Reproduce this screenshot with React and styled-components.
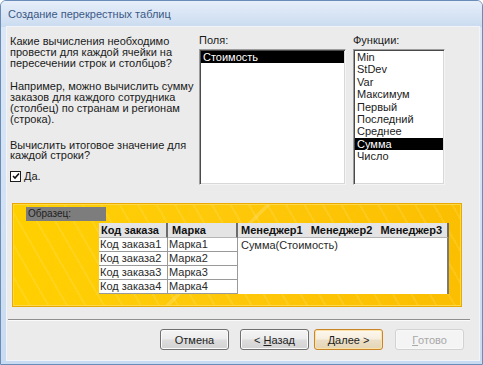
import React from "react";
import styled, { createGlobalStyle } from "styled-components";

const GlobalStyle = createGlobalStyle`
  html, body {
    margin: 0;
    padding: 0;
    background: #ffffff;
  }
  body {
    font-family: "Liberation Sans", Arial, sans-serif;
    font-size: 11px;
    color: #1a1a1a;
  }
`;

const Window = styled.div`
  width: 483px;
  height: 365px;
  box-sizing: border-box;
  border: 1px solid #6a8cb8;
  border-radius: 6px 6px 0 0;
  background: linear-gradient(180deg, #dde8f6 0%, #c9dbf1 100%);
  display: flex;
  flex-direction: column;
  overflow: hidden;
`;

const TitleBar = styled.div`
  height: 26px;
  flex: none;
  display: flex;
  align-items: center;
  padding-left: 7px;
  background: linear-gradient(180deg, #e6eef9 0%, #d6e3f4 60%, #cadbf0 100%);
  color: #3b5a86;
  font-size: 11px;
`;

const Body = styled.div`
  flex: 1;
  margin: 0 3px 4px 6px;
  background: #ebebeb;
  box-shadow: 0 0 0 1px #f1f5fb;
  display: flex;
  flex-direction: column;
`;

const TopRow = styled.div`
  height: 176px;
  box-sizing: border-box;
  padding: 7px 0 0 3px;
  display: flex;
  flex: none;
`;

const Description = styled.div`
  width: 186px;
  padding-top: 2px;
  display: flex;
  flex-direction: column;
`;

const Para = styled.p`
  margin: 0 0 ${(p) => p.$after || 13}px 0;
  line-height: 10.8px;
`;

const CheckRow = styled.label`
  display: flex;
  align-items: center;
  gap: 3px;
`;

const CheckBox = styled.span`
  width: 9px;
  height: 9px;
  border: 1px solid #1c1c1c;
  background: #fff;
  display: flex;
  align-items: center;
  justify-content: center;
`;

const Mnemonic = styled.span`
  text-decoration: underline;
`;

const ListColumn = styled.div`
  width: ${(p) => p.$width}px;
  margin-left: ${(p) => p.$gap}px;
  display: flex;
  flex-direction: column;
`;

const ListLabel = styled.div`
  height: 12px;
  line-height: 12px;
  margin-bottom: 3px;
`;

const ListBox = styled.div`
  height: 136px;
  box-sizing: border-box;
  background: #fff;
  border: 1px solid;
  border-color: #9c9c9c #f4f4f4 #f4f4f4 #9c9c9c;
  box-shadow: inset 1px 1px 0 #4a4a4a, inset -1px -1px 0 #d8d8d8;
  padding: 1px;
`;

const ListItem = styled.div`
  height: 12.4px;
  line-height: 12.4px;
  padding-left: 2px;
  white-space: nowrap;
  background: ${(p) => (p.$selected ? "#000" : "transparent")};
  color: ${(p) => (p.$selected ? "#fff" : "#222")};
`;

const Sample = styled.div`
  margin-left: 5px;
  width: 450px;
  height: 104px;
  box-sizing: border-box;
  border: 1px solid #e9a900;
  box-shadow: inset 0 0 0 1px #ffd94a;
  background:
    linear-gradient(135deg, transparent 0 46%, rgba(255, 255, 255, 0.16) 46% 47%, transparent 47% 100%),
    repeating-linear-gradient(60deg, rgba(255, 255, 255, 0) 0 14px, rgba(255, 236, 150, 0.16) 14px 16px),
    linear-gradient(100deg, #ffd000 0%, #fec90a 45%, #fbbe00 100%);
  padding: 3px 0 0 13px;
  flex: none;
`;

const SampleTag = styled.div`
  width: 80px;
  height: 14px;
  line-height: 14px;
  padding-left: 2px;
  box-sizing: border-box;
  background: #7d7d7d;
  color: #1e1e1e;
  font-size: 10px;
`;

const SampleTable = styled.div`
  margin: 2px 0 0 73px;
  display: grid;
  grid-template-columns: 69px 70px 211px;
  grid-template-rows: 15px repeat(4, 14px);
  background: #fff;
  width: 350px;
`;

const HeadCell = styled.div`
  background: #e4e4e4;
  border-right: 2px solid #6b6b6b;
  border-bottom: 1px solid #b5b5b5;
  font-weight: bold;
  font-size: 11px;
  line-height: 14px;
  padding-left: ${(p) => p.$pad || 2}px;
  white-space: nowrap;
  word-spacing: ${(p) => p.$spread || 0}px;
  color: #111;
  overflow: hidden;
`;

const Cell = styled.div`
  border-right: 1px solid #9a9a9a;
  border-bottom: 1px solid #9a9a9a;
  line-height: 13px;
  padding-left: 1px;
  white-space: nowrap;
  color: #2a2a2a;
  overflow: hidden;
`;

const ValueCell = styled.div`
  grid-column: 3;
  grid-row: 2 / span 4;
  border-right: 2px solid #7a7a7a;
  padding: 1px 0 0 3px;
  color: #2a2a2a;
  line-height: 12px;
`;

const Separator = styled.div`
  margin: 12px 9px 0 1px;
  border-top: 1px solid #8f8f8f;
  border-bottom: 1px solid #fbfbfb;
  flex: none;
`;

const ButtonRow = styled.div`
  margin-top: 8px;
  padding-right: 15px;
  display: flex;
  justify-content: flex-end;
`;

const Button = styled.div`
  width: 69px;
  height: 21px;
  box-sizing: border-box;
  margin-left: ${(p) => p.$gap || 0}px;
  border-radius: 3px;
  border: 1px solid ${(p) => (p.$disabled ? "#d2d2d2" : p.$default ? "#c9852c" : "#707070")};
  background: ${(p) =>
    p.$disabled
      ? "#f4f4f4"
      : p.$default
      ? "linear-gradient(180deg, #fdf8ee 0%, #f6eedf 48%, #ebdfc6 52%, #e4d5b6 100%)"
      : "linear-gradient(180deg, #f5f5f5 0%, #ececec 48%, #dddddd 52%, #d2d2d2 100%)"};
  box-shadow: inset 0 0 0 1px ${(p) => (p.$disabled ? "#f8f8f8" : p.$default ? "#fbe3a6" : "#fbfbfb")};
  color: ${(p) => (p.$disabled ? "#a8a8a8" : "#1d1d1d")};
  display: flex;
  align-items: center;
  justify-content: center;
  font-size: 11px;
`;

const FIELDS = ["Стоимость"];
const FUNCS = ["Min", "StDev", "Var", "Максимум", "Первый", "Последний", "Среднее", "Сумма", "Число"];
const ROWS = [1, 2, 3, 4];

export default function App() {
  return (
    <>
      <GlobalStyle />
      <Window>
        <TitleBar>Создание перекрестных таблиц</TitleBar>
        <Body>
          <TopRow>
            <Description>
              <Para>
                Какие вычисления необходимо
                <br />
                провести для каждой ячейки на
                <br />
                пересечении строк и столбцов?
              </Para>
              <Para $after={15}>
                Например, можно вычислить сумму
                <br />
                заказов для каждого сотрудника
                <br />
                (столбец) по странам и регионам
                <br />
                (строка).
              </Para>
              <Para $after={9}>
                Вычислить итоговое значение для
                <br />
                каждой строки?
              </Para>
              <CheckRow>
                <CheckBox>
                  <svg width="8" height="8" viewBox="0 0 8 8">
                    <path d="M1 4 L3 6 L7 1.5" fill="none" stroke="#111" strokeWidth="1.6" />
                  </svg>
                </CheckBox>
                <span>
                  <Mnemonic>Д</Mnemonic>а.
                </span>
              </CheckRow>
            </Description>
            <ListColumn $width={147} $gap={3}>
              <ListLabel>Поля:</ListLabel>
              <ListBox>
                {FIELDS.map((f) => (
                  <ListItem key={f} $selected>
                    {f}
                  </ListItem>
                ))}
              </ListBox>
            </ListColumn>
            <ListColumn $width={92} $gap={7}>
              <ListLabel>Функции:</ListLabel>
              <ListBox>
                {FUNCS.map((f) => (
                  <ListItem key={f} $selected={f === "Сумма"}>
                    {f}
                  </ListItem>
                ))}
              </ListBox>
            </ListColumn>
          </TopRow>

          <Sample>
            <SampleTag>Образец:</SampleTag>
            <SampleTable>
              <HeadCell>Код заказа</HeadCell>
              <HeadCell $pad={4}>Марка</HeadCell>
              <HeadCell $pad={3} $spread={5}>
                Менеджер1 Менеджер2 Менеджер3
              </HeadCell>
              {ROWS.map((n) => (
                <React.Fragment key={n}>
                  <Cell style={{ gridRow: n + 1, gridColumn: 1 }}>Код заказа{n}</Cell>
                  <Cell style={{ gridRow: n + 1, gridColumn: 2 }}>Марка{n}</Cell>
                </React.Fragment>
              ))}
              <ValueCell>Сумма(Стоимость)</ValueCell>
            </SampleTable>
          </Sample>

          <Separator />

          <ButtonRow>
            <Button>Отмена</Button>
            <Button $gap={11}>
              &lt;&nbsp;<Mnemonic>Н</Mnemonic>азад
            </Button>
            <Button $gap={5} $default>
              <Mnemonic>Д</Mnemonic>алее&nbsp;&gt;
            </Button>
            <Button $gap={12} $disabled>
              <Mnemonic>Г</Mnemonic>отово
            </Button>
          </ButtonRow>
        </Body>
      </Window>
    </>
  );
}
